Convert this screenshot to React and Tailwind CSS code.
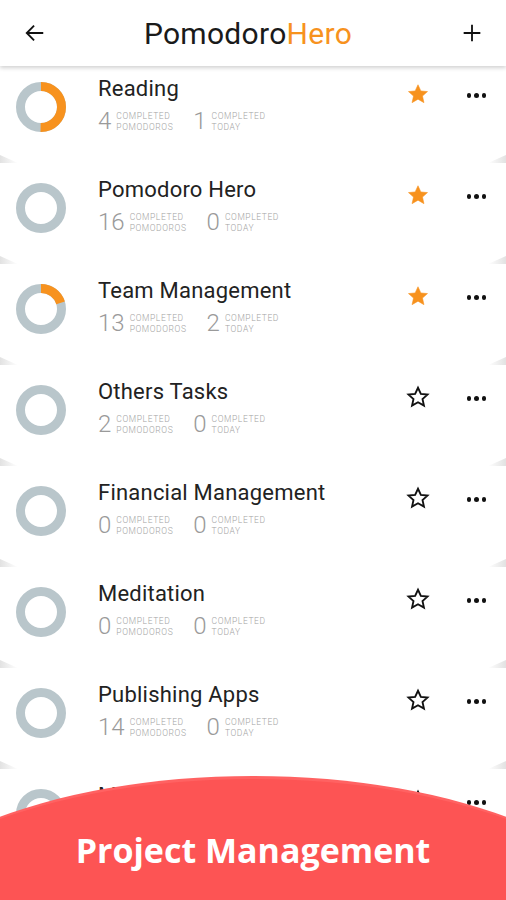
import React from "react";

const projects = [
  { name: "Reading", total: 4, today: 1, progress: 0.5, fav: true },
  { name: "Pomodoro Hero", total: 16, today: 0, progress: 0, fav: true },
  { name: "Team Management", total: 13, today: 2, progress: 0.2, fav: true },
  { name: "Others Tasks", total: 2, today: 0, progress: 0, fav: false },
  { name: "Financial Management", total: 0, today: 0, progress: 0, fav: false },
  { name: "Meditation", total: 0, today: 0, progress: 0, fav: false },
  { name: "Publishing Apps", total: 14, today: 0, progress: 0, fav: false },
  { name: "Marketing", total: 3, today: 0, progress: 0, fav: false, hidden: true },
];

function Ring({ progress }) {
  const r = 20.5;
  const c = 2 * Math.PI * r;
  return (
    <svg width="50" height="50" viewBox="0 0 50 50" className="shrink-0">
      <circle cx="25" cy="25" r={r} fill="none" stroke="#b9c6cb" strokeWidth="9" />
      {progress > 0 && (
        <circle
          cx="25"
          cy="25"
          r={r}
          fill="none"
          stroke="#f7921e"
          strokeWidth="9"
          strokeDasharray={`${c * progress} ${c}`}
          transform="rotate(-90 25 25)"
        />
      )}
    </svg>
  );
}

function Star({ filled }) {
  return (
    <svg width="27" height="27" viewBox="0 0 24 24">
      <path
        d="M12 3l2.65 5.7 6.15.6-4.65 4.15 1.35 6.05L12 16.35 6.5 19.5l1.35-6.05L3.2 9.3l6.15-.6z"
        fill={filled ? "#f7921e" : "none"}
        stroke={filled ? "#f7921e" : "#111"}
        strokeWidth={filled ? "0.5" : "1.7"}
      />
    </svg>
  );
}

function Dots() {
  return (
    <div className="flex gap-[3px]">
      <span className="h-[4.5px] w-[4.5px] rounded-full bg-[#111]" />
      <span className="h-[4.5px] w-[4.5px] rounded-full bg-[#111]" />
      <span className="h-[4.5px] w-[4.5px] rounded-full bg-[#111]" />
    </div>
  );
}

function Stat({ value, label }) {
  return (
    <div className="flex items-center gap-[5px]">
      <span className="text-[24px] leading-none font-light text-[#9a9a9a]">{value}</span>
      <span className="text-[8.5px] leading-[11px] font-light uppercase text-[#a4a4a4] tracking-[0.07em] mt-[1px]">
        Completed
        <br />
        {label}
      </span>
    </div>
  );
}

function Row({ p }) {
  return (
    <div className="relative h-[101px] flex items-start pl-4 bg-white">
      <div className="mt-[20px]">
        <Ring progress={p.progress} />
      </div>
      <div className="ml-8 mt-[15px] flex-1">
        <div className="text-[22px] leading-[24px] text-[#222] tracking-[0.01em]">{p.name}</div>
        {!p.hidden && (
          <div className="mt-[8px] flex gap-[20px]">
            <Stat value={p.total} label="Pomodoros" />
            <Stat value={p.today} label="Today" />
          </div>
        )}
      </div>
      <div className="mt-[19px] w-[26px] flex justify-center">
        <Star filled={p.fav} />
      </div>
      <div className="mt-[31px] ml-[36px] mr-[20px]">
        <Dots />
      </div>
      <div className="absolute left-0 bottom-0 h-[8px] w-[18px] bg-gradient-to-r from-[#e2e2e2] to-transparent [clip-path:polygon(0_0,100%_100%,0_100%)]" />
      <div className="absolute right-0 bottom-0 h-[8px] w-[18px] bg-gradient-to-l from-[#e2e2e2] to-transparent [clip-path:polygon(100%_0,100%_100%,0_100%)]" />
    </div>
  );
}

export default function App() {
  return (
    <div
      className="relative h-[900px] w-[506px] overflow-hidden bg-white"
      style={{ fontFamily: "Roboto, 'Noto Sans', sans-serif" }}
    >
      <header className="relative z-10 h-[66px] flex items-center justify-between px-6 bg-white shadow-[0_2px_4px_rgba(0,0,0,0.18)]">
        <svg width="22" height="22" viewBox="0 0 24 24" fill="none" stroke="#111" strokeWidth="2">
          <path d="M21 12H3M11 4l-8 8 8 8" />
        </svg>
        <h1 className="text-[30px] leading-none text-[#1a1a1a] tracking-[0.01em] mt-[2px] mr-[12px]">
          Pomodoro<span className="text-[#f7921e]">Hero</span>
        </h1>
        <svg width="20" height="20" viewBox="0 0 24 24" fill="none" stroke="#111" strokeWidth="2.2">
          <path d="M12 2v20M2 12h20" />
        </svg>
      </header>

      <div className="-mt-1">
        {projects.map((p) => (
          <Row key={p.name} p={p} />
        ))}
      </div>

      <div className="absolute left-[-127px] top-[776px] h-[322px] w-[760px] rounded-[50%] bg-[#fd5454] border-t-[3px] border-[#ff6262]" />
      <div className="absolute left-0 right-0 top-[833px] text-center">
        <span
          className="text-[34px] font-bold text-white leading-none"
          style={{ fontFamily: "'Open Sans', 'Noto Sans', sans-serif" }}
        >
          Project Management
        </span>
      </div>
    </div>
  );
}
